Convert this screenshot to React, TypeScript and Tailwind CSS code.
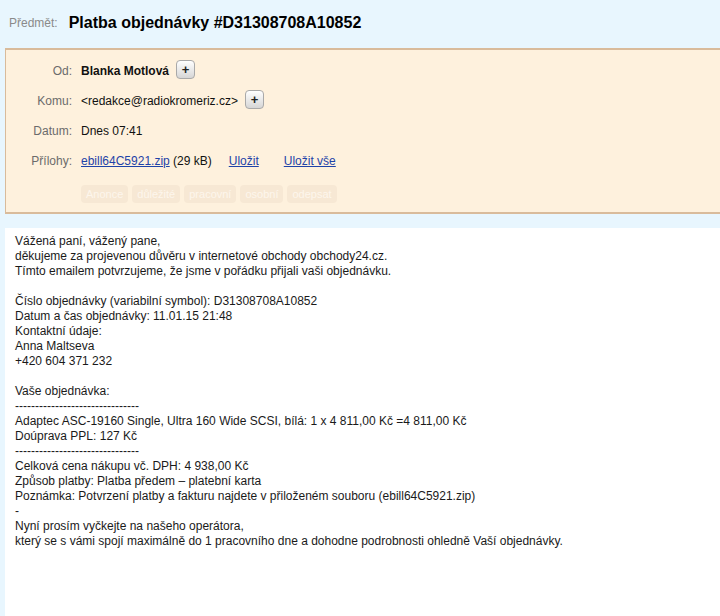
import React from "react";

function PlusBtn() {
  return (
    <span className="ml-[7px] inline-flex h-[19px] w-[19px] items-center justify-center rounded-[4px] border border-[#a9a9a9] bg-gradient-to-b from-[#ffffff] to-[#d6d6d6] text-[13px] font-bold leading-none text-[#222]">
      +
    </span>
  );
}

const body = [
  "Vážená paní, vážený pane,",
  "děkujeme za projevenou důvěru v internetové obchody obchody24.cz.",
  "Tímto emailem potvrzujeme, že jsme v pořádku přijali vaši objednávku.",
  "",
  "Číslo objednávky (variabilní symbol): D31308708A10852",
  "Datum a čas objednávky: 11.01.15 21:48",
  "Kontaktní údaje:",
  "Anna Maltseva",
  "+420 604 371 232",
  "",
  "Vaše objednávka:",
  "-------------------------------",
  "Adaptec ASC-19160 Single, Ultra 160 Wide SCSI, bílá: 1 x 4 811,00 Kč =4 811,00 Kč",
  "Doúprava PPL: 127 Kč",
  "-------------------------------",
  "Celková cena nákupu vč. DPH: 4 938,00 Kč",
  "Způsob platby: Platba předem – platební karta",
  "Poznámka: Potvrzení platby a fakturu najdete v přiloženém souboru (ebill64C5921.zip)",
  "-",
  "Nyní prosím vyčkejte na našeho operátora,",
  "který se s vámi spojí maximálně do 1 pracovního dne a dohodne podrobnosti ohledně Vaší objednávky.",
];

const tags = ["Anonce", "důležité", "pracovní", "osobní", "odepsat"];

export default function App() {
  return (
    <div
      className="h-[616px] w-[720px] overflow-hidden bg-[#e8f6fe] text-[12px] text-[#111]"
      style={{ fontFamily: '"Liberation Sans", Arial, sans-serif' }}
    >
      <div className="flex h-[48px] items-center pb-[2px]">
        <span className="ml-[9px] text-[12px] text-[#8a8a8a]">Předmět:</span>
        <span className="ml-[11px] text-[16px] font-bold text-black">Platba objednávky #D31308708A10852</span>
      </div>
      <div className="ml-[5px] flex h-[166px] flex-col border-b-2 border-l border-t-2 border-[#d9bb9b] bg-[#fef1dd] pt-[10px]">
        <div className="flex h-[30px] items-start">
          <span className="w-[66px] pt-[2px] text-right text-[#6b6b6b]">Od:</span>
          <span className="ml-[9px] pt-[2px] font-bold">Blanka Motlová</span>
          <PlusBtn />
        </div>
        <div className="flex h-[30px] items-start">
          <span className="w-[66px] pt-[2px] text-right text-[#6b6b6b]">Komu:</span>
          <span className="ml-[9px] pt-[2px]">&lt;redakce@radiokromeriz.cz&gt;</span>
          <PlusBtn />
        </div>
        <div className="flex h-[30px] items-start">
          <span className="w-[66px] pt-[2px] text-right text-[#6b6b6b]">Datum:</span>
          <span className="ml-[9px] pt-[2px]">Dnes 07:41</span>
        </div>
        <div className="flex h-[30px] items-start">
          <span className="w-[66px] pt-[2px] text-right text-[#6b6b6b]">Přílohy:</span>
          <span className="ml-[9px] pt-[2px]">
            <span className="text-[#1f43a8] underline">ebill64C5921.zip</span> (29 kB)
          </span>
          <span className="ml-[17px] pt-[2px] text-[#1f43a8] underline">Uložit</span>
          <span className="ml-[25px] pt-[2px] text-[#1f43a8] underline">Uložit vše</span>
        </div>
        <div className="ml-[75px] mt-[5px] flex gap-[4px]">
          {tags.map((t) => (
            <span
              key={t}
              className="rounded-[4px] bg-[#f7e8d4] px-[5px] py-[2px] text-[11px] leading-[14px] text-[#fdf6ec]"
            >
              {t}
            </span>
          ))}
        </div>
      </div>
      <div className="ml-[5px] mt-[14px] h-[400px] bg-white px-[10px] pt-[6px] leading-[15px] text-[#1a1a1a]">
        {body.map((l, i) => (
          <div key={i} className="h-[15px] whitespace-pre">
            {l}
          </div>
        ))}
      </div>
    </div>
  );
}
